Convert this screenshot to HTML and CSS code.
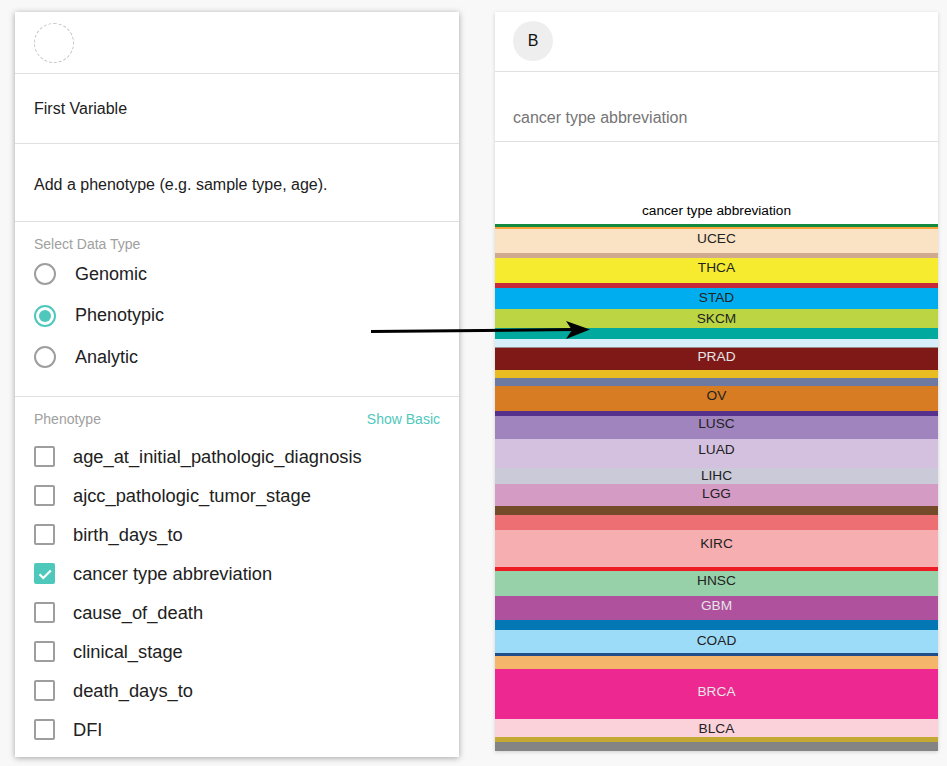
FILE: index.html
```html
<!DOCTYPE html>
<html lang="en">
<head>
<meta charset="utf-8">
<title>Variable wizard</title>
<link rel="stylesheet" href="styles.css">
</head>
<body>
<div class="stage">
  <section class="panel panel-left">
    <div class="panel-head"><div class="avatar avatar-empty"></div></div>
    <div class="row row-title">First Variable</div>
    <div class="row row-hint">Add a phenotype (e.g. sample type, age).</div>
    <div class="group group-type">
      <div class="group-label">Select Data Type</div>
      <ul class="radios">
        <li class="radio"><span class="radio-dot"></span><span class="radio-text">Genomic</span></li>
        <li class="radio radio-on"><span class="radio-dot"></span><span class="radio-text">Phenotypic</span></li>
        <li class="radio"><span class="radio-dot"></span><span class="radio-text">Analytic</span></li>
      </ul>
    </div>
    <div class="group group-pheno">
      <div class="group-head"><span class="group-label">Phenotype</span><span class="link">Show Basic</span></div>
      <ul class="checks">
        <li class="check"><span class="box"></span><span class="check-text">age_at_initial_pathologic_diagnosis</span></li>
        <li class="check"><span class="box"></span><span class="check-text">ajcc_pathologic_tumor_stage</span></li>
        <li class="check"><span class="box"></span><span class="check-text">birth_days_to</span></li>
        <li class="check check-on"><span class="box"><svg class="tick" viewBox="0 0 20 20" width="20" height="20"><path d="M4.5 10.2 L8.3 14 L15.8 6.4" fill="none" stroke="#fff" stroke-width="2.2"/></svg></span><span class="check-text">cancer type abbreviation</span></li>
        <li class="check"><span class="box"></span><span class="check-text">cause_of_death</span></li>
        <li class="check"><span class="box"></span><span class="check-text">clinical_stage</span></li>
        <li class="check"><span class="box"></span><span class="check-text">death_days_to</span></li>
        <li class="check"><span class="box"></span><span class="check-text">DFI</span></li>
      </ul>
    </div>
  </section>

  <section class="panel panel-right">
    <div class="panel-head panel-head-b"><div class="avatar avatar-b">B</div></div>
    <div class="row row-field">cancer type abbreviation</div>
    <div class="chart">
      <div class="chart-title">cancer type abbreviation</div>
      <svg class="bands" width="443" height="527" viewBox="0 224 443 527">
        <rect x="0" y="224" width="443" height="3" fill="#138a3f"/>
        <rect x="0" y="227" width="443" height="2" fill="#f7a23b"/>
        <rect x="0" y="229" width="443" height="24" fill="#fae2c5"/>
        <rect x="0" y="253" width="443" height="5" fill="#cfaa8f"/>
        <rect x="0" y="258" width="443" height="25" fill="#f6eb2f"/>
        <rect x="0" y="283" width="443" height="5" fill="#c62a3a"/>
        <rect x="0" y="288" width="443" height="21" fill="#00aeef"/>
        <rect x="0" y="309" width="443" height="19" fill="#bbd642"/>
        <rect x="0" y="328" width="443" height="11" fill="#00a99d"/>
        <rect x="0" y="339" width="443" height="8" fill="#d6effb"/>
        <rect x="0" y="347" width="443" height="23" fill="#7e1918"/>
        <rect x="0" y="347" width="443" height="1" fill="#9a8a8a"/>
        <rect x="0" y="370" width="443" height="8" fill="#e9bd21"/>
        <rect x="0" y="378" width="443" height="8" fill="#6f7aa2"/>
        <rect x="0" y="386" width="443" height="25" fill="#d87c23"/>
        <rect x="0" y="411" width="443" height="5" fill="#56308d"/>
        <rect x="0" y="416" width="443" height="23" fill="#a084bd"/>
        <rect x="0" y="439" width="443" height="29" fill="#d3c1df"/>
        <rect x="0" y="468" width="443" height="16" fill="#cacad9"/>
        <rect x="0" y="484" width="443" height="22" fill="#d49bc5"/>
        <rect x="0" y="506" width="443" height="9" fill="#744b29"/>
        <rect x="0" y="515" width="443" height="15" fill="#ed6e73"/>
        <rect x="0" y="530" width="443" height="37" fill="#f7aeb1"/>
        <rect x="0" y="567" width="443" height="4" fill="#ed1c24"/>
        <rect x="0" y="571" width="443" height="25" fill="#96d1a9"/>
        <rect x="0" y="596" width="443" height="24" fill="#b0519d"/>
        <rect x="0" y="620" width="443" height="10" fill="#0378b5"/>
        <rect x="0" y="630" width="443" height="23" fill="#9ddcf9"/>
        <rect x="0" y="653" width="443" height="3" fill="#214e89"/>
        <rect x="0" y="656" width="443" height="13" fill="#f5b56a"/>
        <rect x="0" y="669" width="443" height="50" fill="#ed2890"/>
        <rect x="0" y="719" width="443" height="18" fill="#fbd1da"/>
        <rect x="0" y="737" width="443" height="5" fill="#c4a834"/>
        <rect x="0" y="742" width="443" height="9" fill="#848484"/>
        <g class="band-labels" text-anchor="middle">
          <text x="221.5" y="238">UCEC</text>
          <text x="221.5" y="267">THCA</text>
          <text x="221.5" y="297">STAD</text>
          <text x="221.5" y="318">SKCM</text>
          <text x="221.5" y="356" class="light">PRAD</text>
          <text x="221.5" y="395">OV</text>
          <text x="221.5" y="423">LUSC</text>
          <text x="221.5" y="449">LUAD</text>
          <text x="221.5" y="475">LIHC</text>
          <text x="221.5" y="493">LGG</text>
          <text x="221.5" y="543">KIRC</text>
          <text x="221.5" y="580">HNSC</text>
          <text x="221.5" y="605" class="light">GBM</text>
          <text x="221.5" y="640">COAD</text>
          <text x="221.5" y="691" class="light">BRCA</text>
          <text x="221.5" y="728">BLCA</text>
        </g>
      </svg>
    </div>
  </section>

  <svg class="arrow" width="947" height="766" viewBox="0 0 947 766">
    <line x1="371" y1="331.6" x2="574" y2="329.6" stroke="#000" stroke-width="3"/>
    <polygon points="566,321 590,329.4 566,339 572,330" fill="#000"/>
  </svg>
</div>
</body>
</html>
```

FILE: styles.css
```css
* { box-sizing: border-box; }
html, body { margin: 0; padding: 0; }
body {
  background: #f8f8f8;
  font-family: "Liberation Sans", Arial, sans-serif;
  color: #212121;
}
.stage {
  position: relative;
  width: 947px;
  height: 766px;
  display: flex;
  align-items: flex-start;
  gap: 36px;
  padding: 12px 0 0 15px;
}
.panel {
  background: #fff;
  display: flex;
  flex-direction: column;
}
.panel-left {
  width: 444px;
  height: 745px;
  box-shadow: 0 1px 6px rgba(0,0,0,0.34);
}
.panel-right {
  width: 443px;
  box-shadow: 0 1px 4px rgba(0,0,0,0.16);
}
.panel-head {
  height: 62px;
  padding: 11px 19px 0;
  border-bottom: 1px solid #e0e0e0;
}
.panel-head-b {
  height: 60px;
  padding-top: 9px;
  padding-left: 18px;
}
.avatar {
  width: 40px;
  height: 40px;
  border-radius: 50%;
  display: flex;
  align-items: center;
  justify-content: center;
}
.avatar-empty { border: 1px dashed #c4c4c4; }
.avatar-b {
  background: #eeeeee;
  font-size: 16px;
  color: #111;
}
.row {
  font-size: 16px;
  line-height: 20px;
  padding: 0 19px;
  border-bottom: 1px solid #e0e0e0;
}
.row-title { padding-top: 25px; padding-bottom: 24px; }
.row-hint { padding-top: 31px; padding-bottom: 26px; }
.row-field { padding: 36px 18px 13px; color: #757575; }
.group { border-bottom: 1px solid #e0e0e0; padding: 14px 19px 0; }
.group-type { height: 175px; }
.group-pheno { border-bottom: 0; flex: 1; }
.group-label {
  font-size: 14px;
  line-height: 16px;
  color: #a0a0a0;
}
.group-head {
  display: flex;
  justify-content: space-between;
  align-items: center;
}
.link { font-size: 14px; line-height: 16px; color: #4fc8bc; }
ul { list-style: none; margin: 0; padding: 0; }
.radios { margin-top: 1px; }
.radio {
  height: 42px;
  display: flex;
  align-items: center;
  gap: 19px;
  font-size: 18px;
}
.radio:nth-child(2) { height: 41px; }
.radio-dot {
  width: 22px;
  height: 22px;
  border-radius: 50%;
  border: 2px solid #9e9e9e;
  display: flex;
  align-items: center;
  justify-content: center;
  flex: none;
}
.radio-on .radio-dot { border-color: #4fc8bc; }
.radio-on .radio-dot::after {
  content: "";
  width: 12px;
  height: 12px;
  border-radius: 50%;
  background: #4fc8bc;
}
.checks { margin-top: 10px; }
.check {
  height: 39px;
  display: flex;
  align-items: center;
  gap: 18px;
  font-size: 18.3px;
}
.box {
  width: 21px;
  height: 21px;
  border: 2px solid #9e9e9e;
  border-radius: 2px;
  flex: none;
  display: flex;
  align-items: center;
  justify-content: center;
}
.check-on .box { border-color: #4fc8bc; background: #4fc8bc; }
.tick { display: block; flex: none; }
.chart { padding-top: 61px; }
.chart-title {
  font-size: 13.7px;
  line-height: 16px;
  text-align: center;
  color: #000;
  margin-bottom: 5px;
}
.bands { display: block; }
.band-labels text {
  font-family: "Liberation Sans", Arial, sans-serif;
  font-size: 13.7px;
  fill: #222;
  dominant-baseline: central;
}
.band-labels text.light { fill: #e6e6e6; }
.arrow {
  position: absolute;
  left: 0;
  top: 0;
  pointer-events: none;
}
```
